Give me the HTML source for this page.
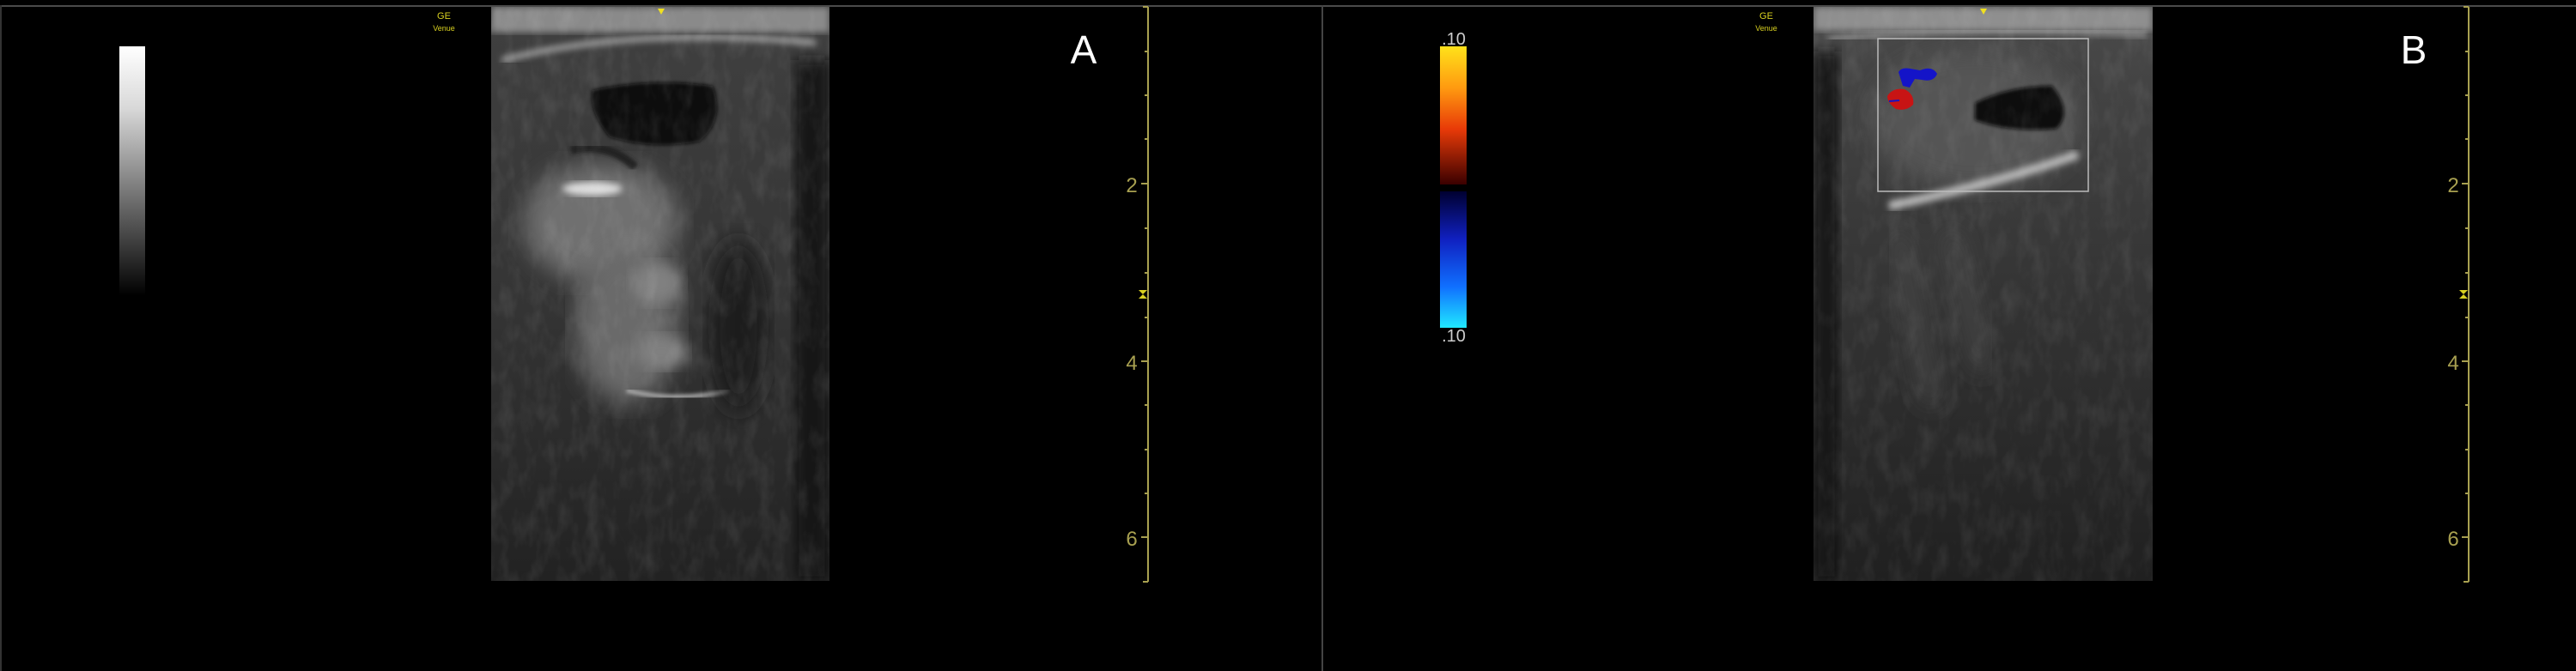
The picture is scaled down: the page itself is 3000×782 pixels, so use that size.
<!DOCTYPE html>
<html><head><meta charset="utf-8"><style>
html,body{margin:0;padding:0;background:#000;width:3000px;height:782px;overflow:hidden}
svg{display:block}
text{font-family:"Liberation Sans",sans-serif}
</style></head><body>
<svg width="3000" height="782" viewBox="0 0 3000 782" xmlns="http://www.w3.org/2000/svg">
<defs>
<filter id="b8"><feGaussianBlur stdDeviation="8"/></filter>
<filter id="b12"><feGaussianBlur stdDeviation="14"/></filter>
<filter id="b4"><feGaussianBlur stdDeviation="4"/></filter>
<filter id="b2"><feGaussianBlur stdDeviation="2"/></filter>
<filter id="noise" x="0" y="0" width="100%" height="100%">
<feTurbulence type="fractalNoise" baseFrequency="0.06 0.03" numOctaves="3" seed="4"/>
<feColorMatrix type="matrix" values="0 0 0 0 1  0 0 0 0 1  0 0 0 0 1  1.2 0 0 0 -0.5"/>
</filter>
<linearGradient id="gray" x1="0" y1="0" x2="0" y2="1"><stop offset="0" stop-color="#fff"/><stop offset="0.25" stop-color="#d8d8d8"/><stop offset="1" stop-color="#000"/></linearGradient>
<linearGradient id="warm" x1="0" y1="0" x2="0" y2="1"><stop offset="0" stop-color="#ffe21a"/><stop offset="0.3" stop-color="#ff9a10"/><stop offset="0.6" stop-color="#e83a08"/><stop offset="1" stop-color="#3a0000"/></linearGradient>
<linearGradient id="cold" x1="0" y1="0" x2="0" y2="1"><stop offset="0" stop-color="#000030"/><stop offset="0.35" stop-color="#1020c0"/><stop offset="0.7" stop-color="#1070ff"/><stop offset="1" stop-color="#20e8ff"/></linearGradient>
<linearGradient id="fadeA" x1="0" y1="0" x2="0" y2="1"><stop offset="0" stop-color="#404040"/><stop offset="0.5" stop-color="#353535"/><stop offset="1" stop-color="#222"/></linearGradient>
<linearGradient id="fadeB" x1="0" y1="0" x2="0" y2="1"><stop offset="0" stop-color="#4a4a4a"/><stop offset="0.4" stop-color="#383838"/><stop offset="1" stop-color="#202020"/></linearGradient>
<clipPath id="ca"><rect x="572" y="8" width="394" height="669"/></clipPath>
<clipPath id="cb"><rect x="2112" y="8" width="395" height="669"/></clipPath>
</defs>
<rect width="3000" height="782" fill="#000"/>
<rect x="0" y="6" width="3000" height="2" fill="#4a4a4a"/>
<rect x="0" y="6" width="2" height="776" fill="#333"/>
<rect x="1539" y="6" width="2" height="776" fill="#444"/>

<!-- Panel A image -->
<g clip-path="url(#ca)">
<rect x="572" y="8" width="394" height="669" fill="url(#fadeA)"/>
<rect x="925" y="70" width="41" height="607" fill="#151515" filter="url(#b8)"/>
<rect x="572" y="8" width="394" height="30" fill="#8a8a8a" filter="url(#b4)"/>
<path d="M585 70 Q740 30 950 50" stroke="#aaa" stroke-width="6" fill="none" filter="url(#b4)"/>
<ellipse cx="700" cy="260" rx="90" ry="70" fill="#707070" filter="url(#b12)"/>
<ellipse cx="730" cy="380" rx="60" ry="90" fill="#6a6a6a" filter="url(#b12)"/>
<ellipse cx="690" cy="220" rx="35" ry="8" fill="#ddd" filter="url(#b4)"/>
<ellipse cx="765" cy="330" rx="30" ry="25" fill="#808080" filter="url(#b8)"/>
<ellipse cx="770" cy="410" rx="30" ry="20" fill="#808080" filter="url(#b8)"/>
<path d="M730 455 Q790 470 850 455" stroke="#aaa" stroke-width="5" fill="none" filter="url(#b2)"/>
<ellipse cx="860" cy="380" rx="35" ry="100" fill="#1e1e1e" filter="url(#b12)"/>
<path d="M690 105 Q760 90 830 100 Q845 140 815 165 Q760 175 710 160 Q685 130 690 105Z" fill="#070707" filter="url(#b2)"/>
<path d="M665 175 Q710 165 740 195" stroke="#222" stroke-width="10" fill="none" filter="url(#b2)"/>
<rect x="572" y="8" width="394" height="669" filter="url(#noise)" opacity="0.14"/>
</g>
<text x="517" y="22" font-size="11" fill="#d8d020" text-anchor="middle">GE</text>
<text x="517" y="36" font-size="9" fill="#d8d020" text-anchor="middle">Venue</text>
<path d="M766 10 L774 10 L770 17Z" fill="#f0e020"/>
<rect x="139" y="54" width="30" height="291" fill="url(#gray)"/>
<text x="1262" y="74" font-size="46" fill="#fff" text-anchor="middle">A</text>
<g stroke="#a8a050" stroke-width="2" fill="none">
<path d="M1337 8 V678"/>
<path d="M1331 8H1337 M1333 60H1337 M1333 111H1337 M1333 162H1337 M1329 214H1337 M1333 266H1337 M1333 318H1337 M1333 370H1337 M1329 421H1337 M1333 472H1337 M1333 524H1337 M1333 575H1337 M1329 626H1337 M1331 678H1337"/>
<path d="M2875 8 V678"/>
<path d="M2869 8H2875 M2871 60H2875 M2871 111H2875 M2871 162H2875 M2867 214H2875 M2871 266H2875 M2871 318H2875 M2871 370H2875 M2867 421H2875 M2871 472H2875 M2871 524H2875 M2871 575H2875 M2867 626H2875 M2869 678H2875"/>
</g>
<g fill="#a8a050" font-size="24">
<text x="1318" y="224" text-anchor="middle">2</text><text x="1318" y="431" text-anchor="middle">4</text><text x="1318" y="636" text-anchor="middle">6</text>
<text x="2857" y="224" text-anchor="middle">2</text><text x="2857" y="431" text-anchor="middle">4</text><text x="2857" y="636" text-anchor="middle">6</text>
</g>
<path d="M1326 338H1336L1326 348H1336Z" fill="#d8d020"/>
<path d="M2864 338H2874L2864 348H2874Z" fill="#d8d020"/>

<!-- Panel B image -->
<g clip-path="url(#cb)">
<rect x="2112" y="8" width="395" height="669" fill="url(#fadeB)"/>
<rect x="2112" y="60" width="30" height="617" fill="#151515" filter="url(#b8)"/>
<rect x="2112" y="8" width="395" height="28" fill="#8f8f8f" filter="url(#b4)"/>
<path d="M2130 45 Q2300 30 2500 40" stroke="#999" stroke-width="6" fill="none" filter="url(#b4)"/>
<ellipse cx="2300" cy="140" rx="120" ry="80" fill="#555" filter="url(#b12)"/>
<path d="M2200 240 Q2320 215 2420 180" stroke="#bbb" stroke-width="10" fill="none" filter="url(#b4)"/>
<path d="M2210 270 L2250 470 M2270 270 L2310 430" stroke="#4c4c4c" stroke-width="16" fill="none" filter="url(#b12)"/>
<path d="M2300 120 Q2340 100 2390 100 Q2415 130 2395 150 Q2340 155 2300 140Z" fill="#0a0a0a" filter="url(#b2)"/>
<rect x="2112" y="8" width="395" height="669" filter="url(#noise)" opacity="0.12"/>
</g>
<rect x="2187" y="45" width="245" height="178" fill="none" stroke="#bbb" stroke-width="1.5"/>
<path d="M2211 84 Q2214 78 2225 80 L2236 82 Q2250 76 2256 86 Q2252 96 2238 93 L2230 92 L2224 102 L2216 100Z" fill="#1414c8"/>
<path d="M2198 112 Q2204 102 2218 104 Q2230 110 2228 122 Q2220 130 2208 127 Q2198 120 2198 112Z" fill="#c81414"/>
<path d="M2200 118 L2212 117" stroke="#1414c8" stroke-width="2"/>
<text x="2057" y="22" font-size="11" fill="#d8d020" text-anchor="middle">GE</text>
<text x="2057" y="36" font-size="9" fill="#d8d020" text-anchor="middle">Venue</text>
<path d="M2306 10 L2314 10 L2310 17Z" fill="#f0e020"/>
<rect x="1677" y="54" width="31" height="161" fill="url(#warm)"/>
<rect x="1677" y="223" width="31" height="159" fill="url(#cold)"/>
<text x="1693" y="52" font-size="20" fill="#ccc" text-anchor="middle">.10</text>
<text x="1693" y="398" font-size="20" fill="#ccc" text-anchor="middle">.10</text>
<text x="2811" y="74" font-size="46" fill="#fff" text-anchor="middle">B</text>
</svg>
</body></html>
